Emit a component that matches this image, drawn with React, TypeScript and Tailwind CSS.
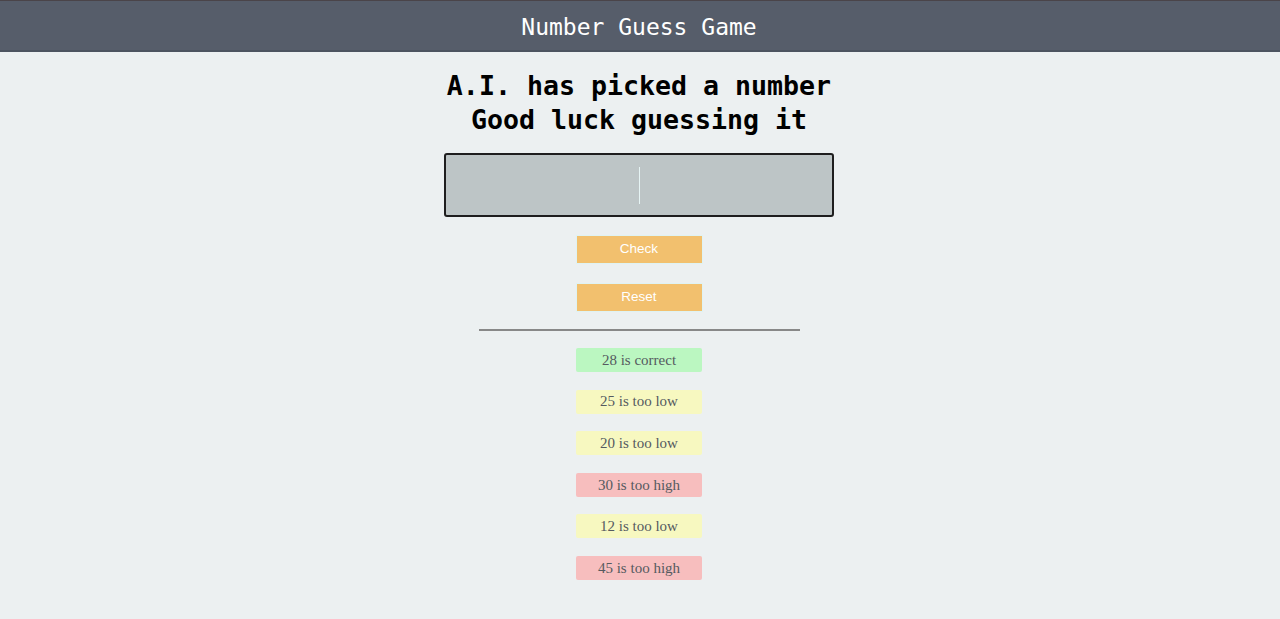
import React from "react";

const results = [
  { text: "28 is correct", cls: "bg-[#bbf7c1]" },
  { text: "25 is too low", cls: "bg-[#f7f8c0]" },
  { text: "20 is too low", cls: "bg-[#f7f8c0]" },
  { text: "30 is too high", cls: "bg-[#f7bebe]" },
  { text: "12 is too low", cls: "bg-[#f7f8c0]" },
  { text: "45 is too high", cls: "bg-[#f7bebe]" },
];

export default function App() {
  return (
    <div className="min-h-[619px] bg-[#ecf0f1]">
      <header className="h-[52px] bg-[#565d6a] border-t border-t-[#4a4449] border-b-2 border-b-[#4c5460] flex items-center justify-center pt-[3px] pr-[2px]">
        <h1 className="text-[23px] text-white font-['DejaVu_Sans_Mono',monospace] leading-none">
          Number Guess Game
        </h1>
      </header>
      <main className="flex flex-col items-center pt-[17px] pr-[2px]">
        <h2 className="text-[26.6px] leading-[34px] font-bold text-black text-center font-['DejaVu_Sans_Mono',monospace]">
          A.I. has picked a number
          <br />
          Good luck guessing it
        </h2>
        <div className="mt-[16px] w-[390px] h-[64px] bg-[#bdc5c6] border-2 border-[#1e1e1e] rounded-[3px] flex items-center justify-center">
          <div className="w-px h-[37px] bg-[#e6f4f4]" />
        </div>
        <button className="mt-[18px] w-[127px] h-[29px] bg-[#f2c06e] border border-[#dff3f3] text-white text-[13.5px] font-['Liberation_Sans',Arial,sans-serif]">
          Check
        </button>
        <button className="mt-[19px] w-[127px] h-[29px] bg-[#f2c06e] border border-[#dff3f3] text-white text-[13.5px] font-['Liberation_Sans',Arial,sans-serif]">
          Reset
        </button>
        <div className="mt-[17px] w-[321px] h-[2px] bg-[#888888]" />
        <ul className="mt-[17px] flex flex-col gap-[17.6px]">
          {results.map((r, i) => (
            <li
              key={i}
              className={`w-[126px] h-[24px] rounded-[2px] flex items-center justify-center text-[15px] text-[#555a60] font-['Liberation_Serif','Times_New_Roman',serif] ${r.cls}`}
            >
              {r.text}
            </li>
          ))}
        </ul>
      </main>
    </div>
  );
}
